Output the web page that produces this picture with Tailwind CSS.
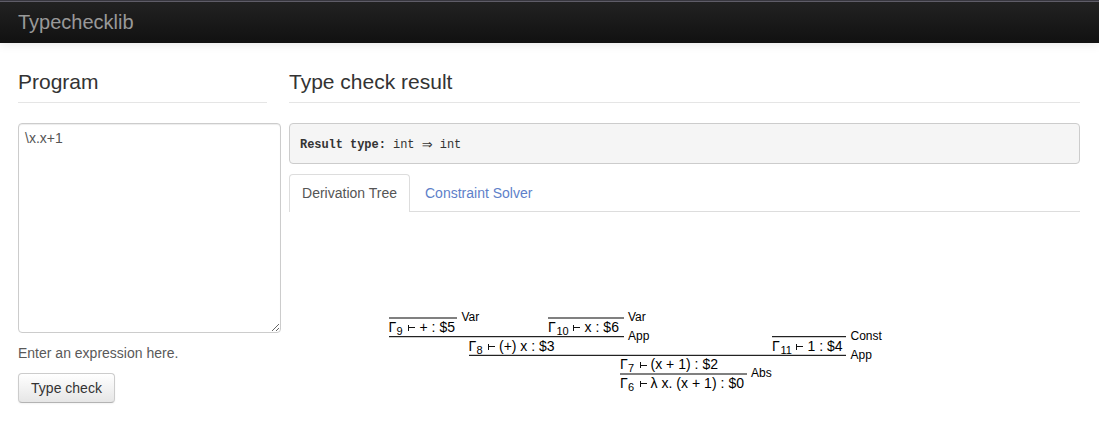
<!DOCTYPE html>
<html lang="en">
<head>
<meta charset="utf-8">
<title>Typechecklib</title>
<script src="https://cdn.jsdelivr.net/npm/@tailwindcss/browser@4"></script>
</head>
<body class="h-[431px] overflow-hidden bg-white font-['Liberation_Sans',Arial,sans-serif] text-[14px] leading-5 text-[#333]">
<header class="h-[43px] border-t border-[#38373f] shadow-[0_1px_10px_rgba(0,0,0,0.1)]">
  <div class="flex h-[42px] items-center border-t border-[#5f5d68] bg-linear-to-b from-[#222] to-[#111] px-[18px] pb-[2px]">
    <span class="text-[20px] text-[#999]">Typechecklib</span>
  </div>
</header>
<main class="flex pl-[18px] pr-[19px] pt-[24px]">
  <section class="w-[271px] shrink-0">
    <h1 class="h-[36px] w-[249px] border-b border-[#e5e5e5] text-[21px] leading-[29px]">Program</h1>
    <textarea class="mt-[20px] block h-[210px] w-[263px] resize rounded-[4px] border border-[#ccc] bg-white px-[6px] py-[4px] text-[14px] leading-5 text-[#555] shadow-[inset_0_1px_1px_rgba(0,0,0,0.075)]">\x.x+1</textarea>
    <p class="mt-[10px] text-[#595959]">Enter an expression here.</p>
    <button class="mt-[10px] block h-[30px] w-[97px] rounded-[4px] border border-[#ccc] border-b-[#b3b3b3] bg-linear-to-b from-white to-[#e6e6e6] text-[14px] leading-5 text-[#333] shadow-[inset_0_1px_0_rgba(255,255,255,0.2),0_1px_2px_rgba(0,0,0,0.05)]">Type check</button>
  </section>
  <section class="min-w-0 flex-1">
    <h1 class="h-[36px] border-b border-[#e5e5e5] text-[21px] leading-[29px]">Type check result</h1>
    <pre class="mt-[20px] flex h-[41px] items-center rounded-[4px] border border-[#ccc] bg-[#f5f5f5] px-[10px] pt-[2px] font-['Liberation_Mono',monospace] text-[12px] tracking-[-0.05px]"><b>Result type:</b> int <span class="inline-block w-[11px] text-center font-['DejaVu_Sans'] text-[13px] leading-4">⇒</span> int</pre>
    <nav class="mt-[10px] flex h-[38px] border-b border-[#ddd]">
      <a class="h-[38px] w-[121px] rounded-t-[4px] border border-b-0 border-[#ddd] bg-white pt-[8px] text-center text-[#555]">Derivation Tree</a>
      <a class="pl-[15px] pt-[9px] text-[#5e7fc9]">Constraint Solver</a>
    </nav>
    <svg class="block h-[219px] w-[791px]" viewBox="289 212 791 219" font-family="Liberation Sans, Arial, sans-serif" font-size="14" fill="#000">
      <g fill="#808080">
        <rect x="389" y="317" width="68" height="2"/>
        <rect x="548" y="317" width="76" height="2"/>
        <rect x="620" y="373" width="127" height="2"/>
      </g>
      <g fill="#222">
        <rect x="389" y="336" width="235" height="1"/>
        <rect x="772" y="336" width="74" height="1"/>
        <rect x="469" y="355" width="377" height="1"/>
      </g>
      <g fill="#ccc">
        <rect x="389" y="337" width="235" height="1"/>
        <rect x="772" y="337" width="74" height="1"/>
        <rect x="469" y="354" width="377" height="1"/>
      </g>
      <g font-size="12">
        <text x="461.500" y="321">Var</text>
        <text x="628" y="321">Var</text>
        <text x="628" y="340">App</text>
        <text x="850.500" y="340">Const</text>
        <text x="850.500" y="359">App</text>
        <text x="751" y="377">Abs</text>
      </g>
      <g fill="none" stroke="#111" stroke-width="1">
        <path d="M408.500 325v6M408.500 327.500h6.500"/>
        <path d="M488.500 344v6M488.500 346.500h6.500"/>
        <path d="M573.500 325v6M573.500 327.500h6.500"/>
        <path d="M796.500 344v6M796.500 346.500h6.500"/>
        <path d="M640.500 362v6M640.500 365.500h6.500"/>
        <path d="M640.500 381v6M640.500 383.500h6.500"/>
      </g>
      <text x="388.500" y="332">Γ<tspan x="396.500" y="335" font-size="11">9</tspan><tspan x="419.500" y="332" textLength="35.500">+ : $5</tspan></text>
      <text x="548" y="332">Γ<tspan x="556.500" y="335" font-size="11" textLength="12">10</tspan><tspan x="584.500" y="332" textLength="34.500">x : $6</tspan></text>
      <text x="468.500" y="351">Γ<tspan x="476.500" y="354" font-size="11">8</tspan><tspan x="499" y="351" textLength="55.500">(+) x : $3</tspan></text>
      <text x="772" y="351">Γ<tspan x="780.500" y="354" font-size="11">11</tspan><tspan x="807.500" y="351" textLength="35">1 : $4</tspan></text>
      <text x="620" y="369">Γ<tspan x="628" y="372" font-size="11">7</tspan><tspan x="650.500" y="369" textLength="67.500">(x + 1) : $2</tspan></text>
      <text x="620" y="388">Γ<tspan x="628" y="391" font-size="11">6</tspan><tspan x="650.500" y="388" textLength="93.500">λ x. (x + 1) : $0</tspan></text>
    </svg>
  </section>
</main>
</body>
</html>
